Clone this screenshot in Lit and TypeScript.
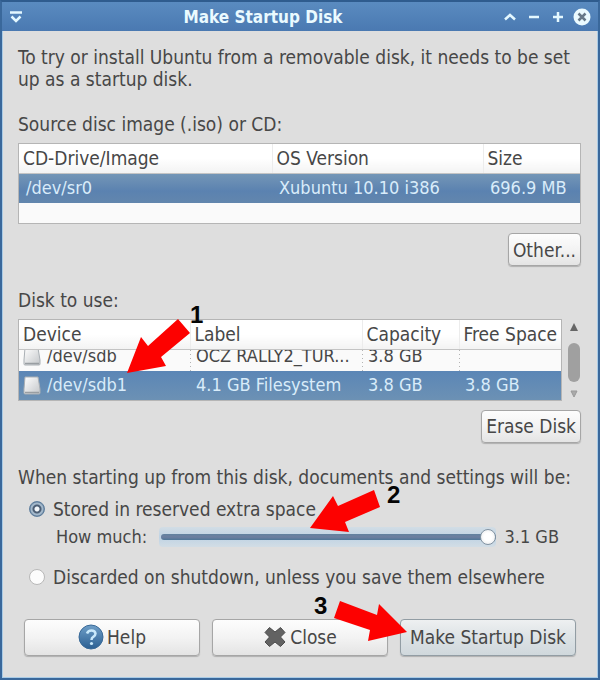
import { LitElement, html, css, svg } from "lit";
import { customElement, property, state } from "lit/decorators.js";

@customElement("step-callout")
export class StepCallout extends LitElement {
  @property() label = "";
  @property() points = "";
  @property({ type: Number }) w = 80;
  @property({ type: Number }) h = 70;
  @property({ type: Number }) tx = 0;
  @property({ type: Number }) ty = 0;

  static styles = css`
    :host { position: absolute; pointer-events: none; z-index: 2; }
    svg { display: block; overflow: visible; }
    .arrow { fill: #fd0100; }
    .num { font: bold 24px "Liberation Sans", Arial, sans-serif; fill: #050505; }
  `;

  render() {
    return html`<svg width=${this.w} height=${this.h} role="img" aria-label="Step ${this.label}">
      ${svg`<polygon class="arrow" points=${this.points}></polygon>
      <text class="num" x=${this.tx} y=${this.ty}>${this.label}</text>`}
    </svg>`;
  }
}

@customElement("app-root")
export class AppRoot extends LitElement {
  @state() private mode = "stored";

  static styles = css`
    :host {
      display: block;
      font: 19px/22px "DejaVu Sans Condensed", "DejaVu Sans", sans-serif;
      color: #474747;
    }
    * { box-sizing: border-box; }
    button, input { font: inherit; color: inherit; margin: 0; }
    .window {
      border: 2px solid #3a689b;
      border-top-color: #2f5c8e;
      background: #dedede;
    }
    .titlebar {
      display: flex;
      align-items: center;
      height: 29px;
      padding: 0 4px 0 2px;
      background: linear-gradient(#5a8bc0, #4a79b1);
      color: #eafaff;
    }
    .title {
      flex: 1;
      margin: 0;
      text-align: center;
      font-size: 17px;
      line-height: 22px;
      font-weight: bold;
    }
    .wbtn { padding: 0; border: 0; background: none; display: block; width: 24px; height: 20px; }
    .wbtn svg { display: block; margin: auto; }
    .body {
      border: 1px solid #a9cbe6;
      border-top: 0;
      padding: 15px 16px 21px 15px;
    }
    p, h2 { margin: 0; font-size: 19px; line-height: 22px; font-weight: normal; }
    .gap { margin-top: 23px; }
    .frame { border: 1px solid #b5b5b5; background: #fafafa; margin-top: 8px; }
    .source { height: 81px; }
    table { width: 100%; border-collapse: collapse; table-layout: fixed; }
    th, td { text-align: left; font-weight: normal; padding: 0; white-space: nowrap; overflow: hidden; }
    th { height: 29px; padding-left: 4px; background: linear-gradient(#fff 50%, #f3f3f3); border-bottom: 1px solid #c4c4c4; }
    th + th { border-left: 1px solid #ececec; }
    td { padding-left: 7px; font-size: 18px; }
    .selected td { height: 30px; }
    .selected {
      color: #d9ecfa;
      background: linear-gradient(#7597b7, #5b82b0 60%, #6286ad);
    }
    .c-os { width: 211px; }
    .c-size { width: 97px; }
    .c-label { width: 172px; }
    .c-cap { width: 97px; }
    .c-free { width: 102px; }
    .row-end { display: flex; justify-content: flex-end; margin-top: 9px; }
    .btn {
      display: flex;
      align-items: center;
      justify-content: center;
      gap: 3px;
      height: 33px;
      padding: 0 4px;
      border: 1px solid #a6a6a6;
      border-radius: 4px;
      background: linear-gradient(#fdfdfd, #f3f3f3 50%, #e4e4e4);
      box-shadow: 0 1px 1px #b0b0b0;
      white-space: nowrap;
    }
    .disks { position: relative; display: flex; margin-top: 8px; }
    .disks .frame { flex: 1; min-width: 0; margin: 0; }
    .disks td { padding-left: 6px; }
    .disks td.dev { padding-left: 3px; }
    .line { display: flex; align-items: center; gap: 5px; height: 29px; flex: none; }
    .clip { display: flex; align-items: flex-end; height: 21px; overflow: hidden; }
    .scrolled td + td {
      background: repeating-linear-gradient(#b4b4b4 0 1px, transparent 1px 4px) left / 1px 100% no-repeat;
    }
    .disks .selected td { height: 29px; }
    .disks .selected { background: linear-gradient(#5b86b6, #6c91b4); }
    .scroll {
      display: flex;
      flex-direction: column;
      align-items: center;
      justify-content: space-between;
      width: 19px;
      padding: 4px 0 3px 5px;
    }
    .thumb { width: 12px; height: 39px; border-radius: 6px; background: #a0a0a0; }
    .thumbwrap { flex: 1; display: flex; align-items: center; padding-top: 4px; }
    .options { position: relative; }
    .opt { display: flex; align-items: center; gap: 8px; padding-left: 11px; margin-top: 10px; }
    .opt input {
      appearance: none;
      flex: none;
      width: 16px;
      height: 16px;
      border: 1px solid #b8b8b8;
      border-radius: 50%;
      background: #fcfcfc;
    }
    .opt input:checked {
      border-color: #5f7f9e;
      background: radial-gradient(circle, #f2f6fa 0 2px, #4c5e74 3px 4px, #a3b8cb 5px 6px, #64809c 7px);
    }
    .amount { display: flex; align-items: center; gap: 8px; padding: 0 22px 0 38px; margin: 6px 0 18px; font-size: 18px; }
    .amount label, .amount output { white-space: nowrap; }
    .amount label { padding-right: 4px; }
    .slider {
      appearance: none;
      flex: 1;
      min-width: 0;
      height: 20px;
      border-radius: 4px;
      background: linear-gradient(#d2dde5, #bfd3e4 50%, #d2dde5);
    }
    .slider::-webkit-slider-runnable-track {
      height: 6px;
      margin-left: 2px;
      border-radius: 3px;
      background: linear-gradient(#62829f, #6d7fa0 50%, #4f7798);
    }
    .slider::-webkit-slider-thumb {
      appearance: none;
      width: 16px;
      height: 16px;
      margin-top: -5px;
      border: 1px solid #8293a2;
      border-radius: 50%;
      background: radial-gradient(#fff 40%, #e4e6e8);
    }
    .actions {
      display: grid;
      grid-template-columns: repeat(3, minmax(0, 1fr));
      gap: 12px;
      margin-top: 31px;
      padding: 0 5px 0 6px;
    }
    .cell { position: relative; }
    .cell .btn { width: 100%; height: 37px; }
    .cell .primary { background: linear-gradient(#eef0f1, #dbe1e4 55%, #d0d8dc); border-color: #929da4; }
    .s1 { left: 109px; top: -14px; }
    .s2 { right: 180px; top: 19px; }
    .s3 { left: -86px; top: -24px; }
  `;

  private disk() {
    return html`<svg width="20" height="19" viewBox="0 0 20 19" aria-hidden="true">
      <defs><linearGradient id="g" x2="1" y2="1"><stop stop-color="#fff"/><stop offset="1" stop-color="#c3c6c9"/></linearGradient></defs>
      <path d="M3 1h13l2 12v4q0 1-1 1H3q-1 0-1-1v-4z" fill="url(#g)" stroke="#a9afb4"/>
      <path d="M3 16.500h14" stroke="#999ea2" stroke-width="1.500"/>
    </svg>`;
  }

  render() {
    return html`
      <main class="window">
        <header class="titlebar">
          <button class="wbtn" aria-label="Window menu">
            <svg width="14" height="14" viewBox="0 0 14 14"><path d="M1 2.500h12M2.500 6.500l4.500 4.500 4.500-4.500" fill="none" stroke="#e4f8ff" stroke-width="2.500"/></svg>
          </button>
          <h1 class="title">Make Startup Disk</h1>
          <button class="wbtn" aria-label="Shade">
            <svg width="14" height="20" viewBox="0 0 14 20"><path d="M2 12.500l5-4.500 5 4.500" fill="none" stroke="#e4f8ff" stroke-width="2.500"/></svg>
          </button>
          <button class="wbtn" aria-label="Minimize">
            <svg width="14" height="20" viewBox="0 0 14 20"><path d="M2 10h10" stroke="#e4f8ff" stroke-width="2.500"/></svg>
          </button>
          <button class="wbtn" aria-label="Maximize">
            <svg width="14" height="20" viewBox="0 0 14 20"><path d="M2 10h10M7 5v10" stroke="#e4f8ff" stroke-width="2.500"/></svg>
          </button>
          <button class="wbtn" aria-label="Close window">
            <svg width="18" height="20" viewBox="0 0 18 20"><circle cx="9" cy="10" r="8.500" fill="#eafaff"/><path d="M5.500 6.500l7 7M12.500 6.500l-7 7" stroke="#667888" stroke-width="2.500"/></svg>
          </button>
        </header>
        <div class="body">
          <p>To try or install Ubuntu from a removable disk, it needs to be set up as a startup disk.</p>
          <h2 class="gap">Source disc image (.iso) or CD:</h2>
          <div class="frame source">
            <table>
              <colgroup><col><col class="c-os"><col class="c-size"></colgroup>
              <thead><tr><th>CD-Drive/Image</th><th>OS Version</th><th>Size</th></tr></thead>
              <tbody><tr class="selected"><td>/dev/sr0</td><td>Xubuntu 10.10 i386</td><td>696.9 MB</td></tr></tbody>
            </table>
          </div>
          <div class="row-end"><button class="btn">Other...</button></div>
          <h2 class="gap">Disk to use:</h2>
          <div class="disks">
            <div class="frame">
              <table>
                <colgroup><col><col class="c-label"><col class="c-cap"><col class="c-free"></colgroup>
                <thead><tr><th>Device</th><th>Label</th><th>Capacity</th><th>Free Space</th></tr></thead>
                <tbody>
                  <tr class="scrolled">
                    <td class="dev"><div class="clip"><span class="line">${this.disk()}/dev/sdb</span></div></td>
                    <td><div class="clip"><span class="line">OCZ RALLY2_TUR...</span></div></td>
                    <td><div class="clip"><span class="line">3.8 GB</span></div></td>
                    <td></td>
                  </tr>
                  <tr class="selected">
                    <td class="dev"><span class="line">${this.disk()}/dev/sdb1</span></td>
                    <td>4.1 GB Filesystem</td><td>3.8 GB</td><td>3.8 GB</td>
                  </tr>
                </tbody>
              </table>
            </div>
            <div class="scroll" aria-hidden="true">
              <svg width="8" height="8"><path d="M4 0l4 8H0z" fill="#666"/></svg>
              <div class="thumbwrap"><div class="thumb"></div></div>
              <svg width="8" height="8"><path d="M4 7l3-6H1z" fill="#aaa" stroke="#999"/></svg>
            </div>
            <step-callout class="s1" label="1" w="76" h="70" tx="63" ty="18"
              points="0,68 14,32 21,41 51,14 63,28 34,52 39,61"></step-callout>
          </div>
          <div class="row-end"><button class="btn">Erase Disk</button></div>
          <section class="options gap">
            <h2 id="q">When starting up from this disk, documents and settings will be:</h2>
            <div role="radiogroup" aria-labelledby="q">
              <label class="opt"><input type="radio" name="mode" .checked=${this.mode === "stored"} @change=${() => (this.mode = "stored")}>Stored in reserved extra space</label>
              <div class="amount">
                <label for="size">How much:</label>
                <input class="slider" id="size" type="range" min="0" max="31" value="31">
                <output for="size">3.1 GB</output>
              </div>
              <label class="opt"><input type="radio" name="mode" .checked=${this.mode === "discard"} @change=${() => (this.mode = "discard")}>Discarded on shutdown, unless you save them elsewhere</label>
            </div>
            <step-callout class="s2" label="2" w="91" h="48" tx="77" ty="18"
              points="0,43 23,11 28,21 64,5 70,22 35,37 39,47"></step-callout>
          </section>
          <div class="actions">
            <div class="cell"><button class="btn">
              <svg width="26" height="26" viewBox="0 0 26 26" aria-hidden="true">
                <defs><linearGradient id="h" x2="0" y2="1"><stop stop-color="#6f9fc8"/><stop offset="1" stop-color="#2b5f92"/></linearGradient></defs>
                <circle cx="13" cy="13" r="12" fill="url(#h)" stroke="#3a6a98"/>
                <path d="M9 9.500q1-3 4.500-3t4 3q0 2-2.200 3.300-1.800 1.200-1.800 3.200" fill="none" stroke="#c9e9fb" stroke-width="2.500"/>
                <circle cx="13.500" cy="19.500" r="1.600" fill="#c9e9fb"/>
              </svg>Help</button></div>
            <div class="cell"><button class="btn">
              <svg width="24" height="24" viewBox="0 0 24 24" aria-hidden="true">
                <path d="M6.500 2.500l5.500 4.500 5.500-4.500 4.500 5-4.500 4.500 4.500 5-4.500 4.500-5.500-4.500-5.500 4.500-4.500-4.500 4.500-5-4.500-4.500z" fill="#626262" stroke="#4c4c4c" stroke-linejoin="round"/>
              </svg>Close</button></div>
            <div class="cell"><button class="btn primary">Make Startup Disk</button>
              <step-callout class="s3" label="3" w="94" h="46" tx="0" ty="19"
                points="93,37 65,9 63,20 26,6 20,23 56,35 54,46"></step-callout>
            </div>
          </div>
        </div>
      </main>`;
  }
}
